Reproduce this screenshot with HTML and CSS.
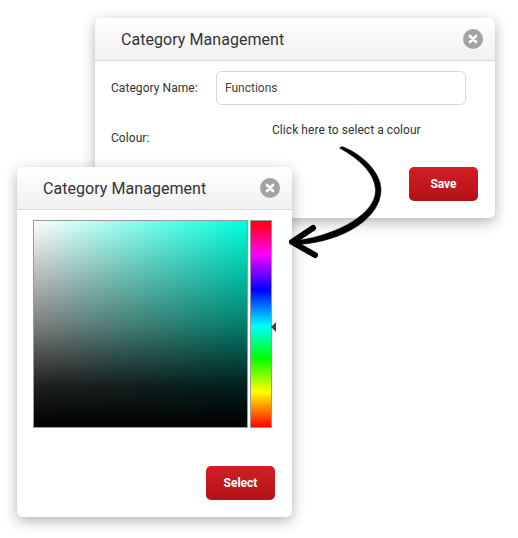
FILE: index.html
```html
<!DOCTYPE html>
<html>
<head>
  <title>Category Management</title>
  <link rel="stylesheet" href="styles.css">
</head>
<body>
  <div class="dialog dialog-back">
    <div class="dialog-header">
      <span class="dialog-title">Category Management</span>
      <span class="close-btn">
        <svg width="12" height="12" viewBox="0 0 12 12"><path d="M3 3L9 9M9 3L3 9" stroke="#fff" stroke-width="2.8" stroke-linecap="round"/></svg>
      </span>
    </div>
    <div class="dialog-body">
      <div class="form-row">
        <label class="form-label">Category Name:</label>
        <input class="form-input" type="text" value="Functions">
      </div>
      <div class="colour-row">
        <span class="form-label">Colour:</span>
        <span class="colour-hint">Click here to select a colour</span>
      </div>
      <div class="dialog-actions">
        <button class="red-btn">Save</button>
      </div>
    </div>
  </div>

  <div class="dialog dialog-front">
    <div class="dialog-header">
      <span class="dialog-title">Category Management</span>
      <span class="close-btn">
        <svg width="12" height="12" viewBox="0 0 12 12"><path d="M3 3L9 9M9 3L3 9" stroke="#fff" stroke-width="2.8" stroke-linecap="round"/></svg>
      </span>
    </div>
    <div class="dialog-body picker-body">
      <div class="picker">
        <div class="picker-square">
          <div class="picker-white"></div>
          <div class="picker-black"></div>
        </div>
        <div class="picker-hue">
          <span class="hue-marker"></span>
        </div>
      </div>
      <div class="dialog-actions">
        <button class="red-btn">Select</button>
      </div>
    </div>
  </div>

  <svg class="arrow" width="518" height="538" viewBox="0 0 518 538">
    <path d="M339.5 148C356 157 375 172 375.5 190C376 213 340 234 298 240.5L298.5 244.5C345 241.5 381 217 381 190C381 170 358 152 342 146.5Z" fill="#000" stroke="#000" stroke-width="0.5" stroke-linejoin="round"/>
    <path d="M313 228L292 242L315 255" fill="none" stroke="#000" stroke-width="6" stroke-linecap="round" stroke-linejoin="round"/>
  </svg>
</body>
</html>
```

FILE: styles.css
```css
body {
  margin: 0;
  background-color: #ffffff;
  font-family: Roboto, Arial, sans-serif;
  color: #333333;
}

.dialog {
  position: absolute;
  display: flex;
  flex-direction: column;
  background-color: #ffffff;
  border-radius: 6px;
  box-shadow: 0 4px 14px rgba(0, 0, 0, 0.3);
}

.dialog-back {
  left: 95px;
  top: 18px;
  width: 400px;
  height: 200px;
}

.dialog-front {
  left: 17px;
  top: 167px;
  width: 275px;
  height: 350px;
}

.dialog-header {
  display: flex;
  align-items: center;
  justify-content: space-between;
  box-sizing: border-box;
  height: 43px;
  padding: 0 12px 0 26px;
  background: linear-gradient(#ffffff, #f1f1f1);
  border-bottom: 1px solid #d8d8d8;
  border-radius: 6px 6px 0 0;
}

.dialog-title {
  font-size: 16px;
  letter-spacing: 0.05px;
  color: #333333;
}

.close-btn {
  display: flex;
  align-items: center;
  justify-content: center;
  width: 20px;
  height: 20px;
  border-radius: 50%;
  background-color: #a3a3a3;
}

.dialog-body {
  display: flex;
  flex-direction: column;
  flex: 1;
  padding: 10px 17px 17px 16px;
}

.form-row {
  display: flex;
  align-items: center;
  gap: 18px;
  padding-right: 12px;
}

.form-label {
  font-size: 12px;
  letter-spacing: 0.06px;
  width: 87px;
  flex-shrink: 0;
  white-space: nowrap;
}

.form-input {
  flex: 1;
  min-width: 0;
  box-sizing: border-box;
  height: 34px;
  padding: 0 8px;
  font-family: inherit;
  font-size: 12px;
  color: #444444;
  background-color: #ffffff;
  border: 1px solid #d9d9d9;
  border-radius: 5px;
}

.colour-row {
  display: flex;
  align-items: flex-start;
  margin-top: 18px;
}

.colour-row .form-label {
  margin-top: 8px;
}

.colour-hint {
  margin-left: 74px;
  font-size: 12px;
  letter-spacing: 0.06px;
}

.dialog-actions {
  display: flex;
  justify-content: flex-end;
  margin-top: auto;
}

.red-btn {
  width: 69px;
  height: 34px;
  padding: 0;
  font-family: inherit;
  font-size: 12px;
  font-weight: 700;
  color: #ffffff;
  background: linear-gradient(#d11f25, #b31217);
  border: none;
  border-radius: 5px;
}

.picker-body {
  padding-top: 10px;
}

.picker {
  display: flex;
  gap: 2px;
}

.picker-square {
  position: relative;
  box-sizing: border-box;
  width: 215px;
  height: 208px;
  background-color: #00ffdc;
  border: 1px solid #999999;
}

.picker-white,
.picker-black {
  position: absolute;
  inset: 0;
}

.picker-white {
  background: linear-gradient(to right, #ffffff, rgba(255, 255, 255, 0));
}

.picker-black {
  background: linear-gradient(to bottom, rgba(0, 0, 0, 0), rgba(0, 0, 0, 0.5) 50%, rgba(0, 0, 0, 0.88) 80%, #000000);
}

.picker-hue {
  position: relative;
  box-sizing: border-box;
  width: 22px;
  height: 208px;
  border: 1px solid #999999;
  background: linear-gradient(#ff0000, #ff00ff 16%, #0000ff 33.5%, #00ffff 51%, #00ff00 66.5%, #ffff00 83%, #ff0000);
}

.hue-marker {
  position: absolute;
  right: -5px;
  top: 101px;
  border-style: solid;
  border-width: 5px 5px 5px 0;
  border-color: transparent #444444 transparent transparent;
}

.arrow {
  position: absolute;
  left: 0;
  top: 0;
  pointer-events: none;
}
```
